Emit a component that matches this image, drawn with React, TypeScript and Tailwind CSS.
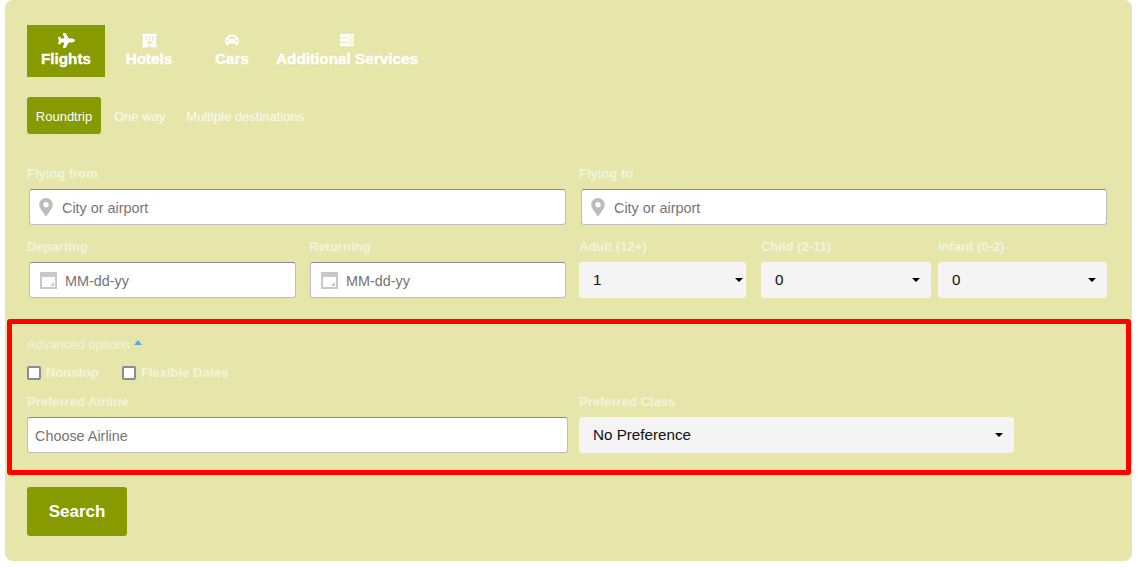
import { FaPlane, FaHotel, FaCar, FaServer, FaMapMarkerAlt } from 'react-icons/fa'

const labelClass = 'block h-[16px] text-[13px] leading-[16px] font-bold text-[#f3f3dc]'
const inputClass =
  'flex h-[36px] items-center rounded-[3px] border border-[#bdbdbd] border-t-[#8a8a8a] bg-white text-[14.4px] text-[#757575]'

function CalendarIcon() {
  return (
    <svg width="17" height="17" viewBox="0 0 17 17" className="shrink-0">
      <path d="M0 0h17v17H0z" fill="#c8c8c8" />
      <path d="M2 5h13v10H2z" fill="#fff" />
      <path d="M14 10v4h-4z" fill="#c8c8c8" />
    </svg>
  )
}

function CityInput({ className }: { className: string }) {
  return (
    <div className={`${inputClass} ${className} pl-[9px]`}>
      <FaMapMarkerAlt className="h-[18px] w-[14px] shrink-0 text-[#bdbdbd]" />
      <span className="ml-[9px] pt-[4px]">City or airport</span>
    </div>
  )
}

function DateInput({ className }: { className: string }) {
  return (
    <div className={`${inputClass} ${className} pl-[10px]`}>
      <CalendarIcon />
      <span className="ml-[8px] pt-[4px]">MM-dd-yy</span>
    </div>
  )
}

// className carries the right padding: the arrow sits closer to the edge on the Adult select
function Select({ value, className }: { value: string; className: string }) {
  return (
    <div
      className={`flex h-[36px] items-center justify-between rounded-[3px] bg-[#f4f4f4] pl-[14px] text-[15.2px] text-[#111] ${className}`}
    >
      <span>{value}</span>
      <span className="h-0 w-0 border-x-[4px] border-t-[4px] border-x-transparent border-t-black" />
    </div>
  )
}

function Tab({ icon, label, className }: { icon: React.ReactNode; label: string; className: string }) {
  return (
    <div className={`flex h-[52px] flex-col items-center justify-center gap-[1px] pb-[3px] text-white ${className}`}>
      <div className="flex h-[18px] items-center">{icon}</div>
      <span className="text-[15.3px] leading-[18px] font-bold [-webkit-text-stroke:0.3px_white]">{label}</span>
    </div>
  )
}

export default function App() {
  return (
    <div className="h-[568px] w-[1142px] bg-white font-['Liberation_Sans',Arial,sans-serif]">
      <div className="ml-[5px] h-[561px] w-[1127px] rounded-[8px] bg-[#e6e6ab] pt-[25px]">
        {/* Tabs */}
        <div className="ml-[22px] flex">
          <Tab
            className="w-[78px] bg-[#879a00]"
            label="Flights"
            icon={<FaPlane className="h-[17px] w-[17px]" />}
          />
          <Tab
            className="w-[88px]"
            label="Hotels"
            icon={<FaHotel className="h-[15px] w-[15px]" />}
          />
          <Tab className="w-[78px]" label="Cars" icon={<FaCar className="h-[14px] w-[14px]" />} />
          <Tab
            className="w-[152px]"
            label="Additional Services"
            icon={<FaServer className="h-[14px] w-[14px]" />}
          />
        </div>

        {/* Trip type */}
        <div className="mt-[20px] ml-[22px] flex h-[37px] items-center text-[13px] text-[#fbfbf0]">
          <span className="flex h-[37px] w-[74px] items-center justify-center rounded-[3px] bg-[#879a00] pt-[2px] text-white">
            Roundtrip
          </span>
          <span className="ml-[13px] pt-[2px]">One way</span>
          <span className="ml-[21px] pt-[2px]">Multiple destinations</span>
        </div>

        {/* Route */}
        <div className="mt-[32px] flex h-[16px]">
          <label className={`${labelClass} ml-[22px] w-[552px]`}>Flying from</label>
          <label className={labelClass}>Flying to</label>
        </div>
        <div className="mt-[7px] ml-[24px] flex gap-[15px]">
          <CityInput className="w-[537px]" />
          <CityInput className="w-[526px]" />
        </div>

        {/* Dates and passengers */}
        <div className="mt-[14px] flex h-[16px]">
          <label className={`${labelClass} ml-[22px] w-[282px]`}>Departing</label>
          <label className={`${labelClass} w-[270px]`}>Returning</label>
          <label className={`${labelClass} w-[182px]`}>Adult (12+)</label>
          <label className={`${labelClass} w-[177px]`}>Child (2-11)</label>
          <label className={labelClass}>Infant (0-2)</label>
        </div>
        <div className="mt-[7px] ml-[24px] flex">
          <DateInput className="w-[267px]" />
          <DateInput className="ml-[14px] w-[256px]" />
          <Select value="1" className="ml-[13px] w-[167px] pr-[3px]" />
          <Select value="0" className="ml-[15px] w-[170px] pr-[11px]" />
          <Select value="0" className="ml-[7px] w-[169px] pr-[11px]" />
        </div>

        {/* Advanced options */}
        <div className="mt-[21px] ml-[2px] h-[156px] w-[1124px] rounded-[3px] border-[5px] border-[#ff0000] pt-[13px] pl-[15px]">
          <div className="flex h-[16px] items-center text-[13px] text-[#f3f3dc]">
            Advanced options
            <span className="mb-[5px] ml-[4px] h-0 w-0 border-x-[4px] border-b-[5px] border-x-transparent border-b-[#55aaee]" />
          </div>
          <div className="mt-[12px] flex h-[16px] items-center text-[13px] font-bold text-[#f3f3dc]">
            <span className="h-[14px] w-[14px] rounded-[2px] border-2 border-[#8a8a9a] bg-white" />
            <span className="ml-[5px] w-[62px]">Nonstop</span>
            <span className="ml-[14px] h-[14px] w-[14px] rounded-[2px] border-2 border-[#8a8a9a] bg-white" />
            <span className="ml-[5px]">Flexible Dates</span>
          </div>
          <div className="mt-[13px] flex h-[16px]">
            <label className={`${labelClass} w-[552px]`}>Preferred Airline</label>
            <label className={labelClass}>Preferred Class</label>
          </div>
          <div className="mt-[7px] flex">
            <div className={`${inputClass} w-[541px] pl-[7px]`}>
              <span className="pt-[4px]">Choose Airline</span>
            </div>
            <Select value="No Preference" className="ml-[11px] w-[435px] pr-[11px]" />
          </div>
        </div>

        <button className="mt-[12px] ml-[22px] h-[49px] w-[100px] rounded-[3px] bg-[#879a00] text-[17px] font-bold text-white">
          Search
        </button>
      </div>
    </div>
  )
}
